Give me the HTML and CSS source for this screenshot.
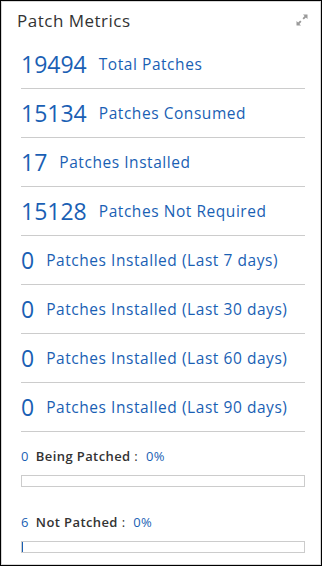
FILE: index.html
```html
<!DOCTYPE html>
<html lang="en">
<head>
    <meta charset="UTF-8">
    <title>Patch Metrics</title>
    <link rel="stylesheet" href="styles.css">
</head>
<body>
    <div class="card">
        <div class="card-header">
            <h2>Patch Metrics</h2>
            <svg class="expand" width="12" height="12" viewBox="0 0 12 12">
                <path d="M7 0.5h4.5v4.5l-1.6-1.6-2.1 2.1-1.3-1.3 2.1-2.1z" fill="#9a9a9a"/>
                <path d="M5 11.5H0.5V7l1.6 1.6 2.1-2.1 1.3 1.3-2.1 2.1z" fill="#9a9a9a"/>
            </svg>
        </div>
        <ul class="metrics">
            <li><span class="num">19494</span><span class="label">Total Patches</span></li>
            <li><span class="num">15134</span><span class="label">Patches Consumed</span></li>
            <li><span class="num">17</span><span class="label">Patches Installed</span></li>
            <li><span class="num">15128</span><span class="label">Patches Not Required</span></li>
            <li><span class="num">0</span><span class="label">Patches Installed (Last 7 days)</span></li>
            <li><span class="num">0</span><span class="label">Patches Installed (Last 30 days)</span></li>
            <li><span class="num">0</span><span class="label">Patches Installed (Last 60 days)</span></li>
            <li><span class="num">0</span><span class="label">Patches Installed (Last 90 days)</span></li>
        </ul>
        <div class="status">
            <div class="status-line"><span class="count">0</span><b>Being Patched</b> : <span class="pct">0%</span></div>
            <div class="bar"><div class="fill" style="width: 0%"></div></div>
        </div>
        <div class="status">
            <div class="status-line"><span class="count">6</span><b>Not Patched</b> : <span class="pct">0%</span></div>
            <div class="bar"><div class="fill" style="width: 0.4%"></div></div>
        </div>
    </div>
</body>
</html>
```

FILE: styles.css
```css
body {
    margin: 0;
    font-family: 'Open Sans', 'Liberation Sans', sans-serif;
    background: #fff;
}
.card {
    width: 322px;
    height: 566px;
    box-sizing: border-box;
    border: 1px solid #000;
    box-shadow: inset 0 0 0 1px #d7d7d7;
    padding: 0 16px 0 20px;
    overflow: hidden;
}
.card-header {
    display: flex;
    justify-content: space-between;
    align-items: center;
    height: 38px;
    margin-left: -4px;
}
.card-header h2 {
    margin: 0;
    font-size: 17px;
    font-weight: 400;
    letter-spacing: 0.5px;
    color: #333;
}
.expand {
    margin-right: -3px;
}
.metrics {
    list-style: none;
    margin: 0;
    padding: 0;
}
.metrics li {
    display: flex;
    align-items: center;
    height: 48px;
    border-bottom: 1px solid #ccc;
}
.metrics li:first-child {
    height: 49px;
}
.num {
    font-size: 23px;
    color: #1a5fb4;
    margin-right: 12px;
}
.label {
    font-size: 15.5px;
    letter-spacing: 0.55px;
    color: #1a5fb4;
}
.status {
    padding-top: 13px;
}
.status + .status {
    padding-top: 24px;
}
.status-line {
    font-size: 13px;
    letter-spacing: 0.4px;
    color: #333;
    height: 22px;
    line-height: 22px;
}
.status-line b {
    font-weight: 600;
}
.count {
    color: #1a5fb4;
    margin-right: 7px;
}
.pct {
    color: #1a5fb4;
    margin-left: 4px;
}
.bar {
    margin-top: 8px;
    height: 10px;
    border: 1px solid #ccc;
}
.fill {
    height: 100%;
    background: #1a5fb4;
}
```
